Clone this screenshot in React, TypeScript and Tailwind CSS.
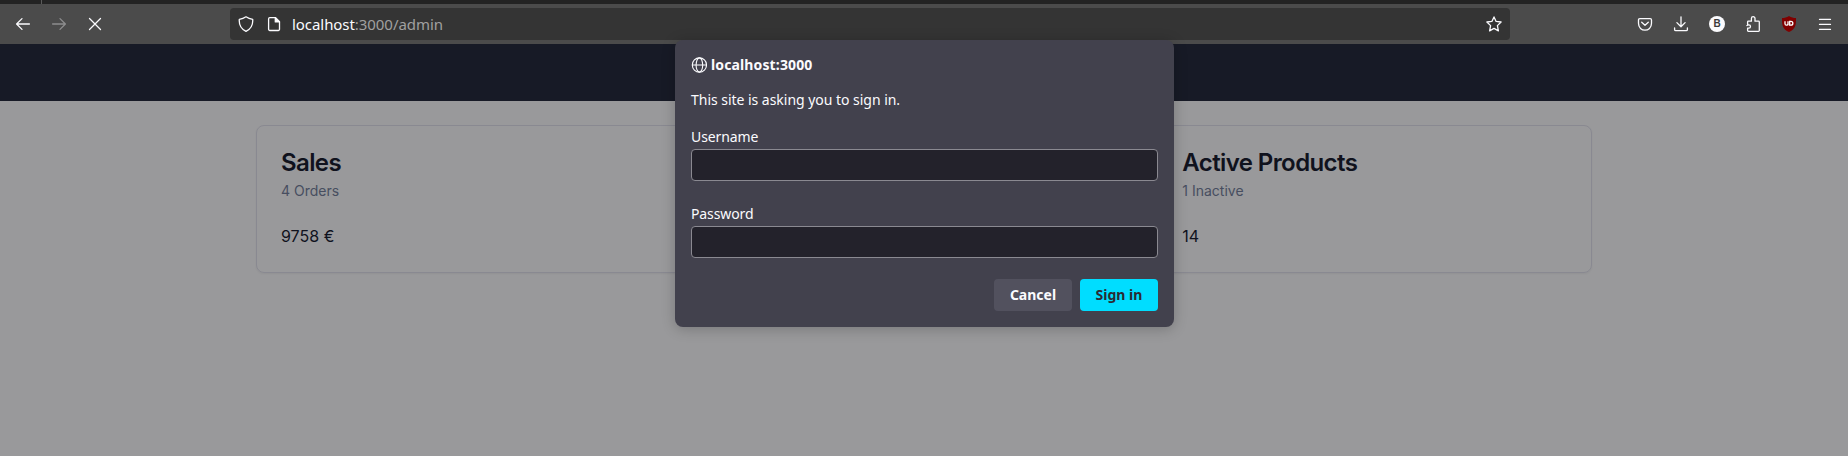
import React from "react";

type IconProps = { children: React.ReactNode; className?: string };

function Icon({ children, className = "" }: IconProps) {
  return (
    <svg
      viewBox="0 0 16 16"
      className={`size-4 shrink-0 ${className}`}
      fill="none"
      stroke="currentColor"
      strokeWidth="1.3"
      strokeLinecap="round"
      strokeLinejoin="round"
    >
      {children}
    </svg>
  );
}

function Toolbar() {
  return (
    <div className="flex h-10 items-center bg-[#4b4b4b] text-[#fbfbfe]">
      <div className="flex w-[230px] shrink-0 gap-5 pl-[15px]">
        <Icon>
          <path d="M14.4 8H1.8M7 2.6 1.6 8 7 13.4" />
        </Icon>
        <Icon className="text-[#8d8d8e]">
          <path d="M1.6 8h12.6M9 2.6 14.4 8 9 13.4" />
        </Icon>
        <Icon>
          <path d="m2.5 2.5 11 11M13.5 2.5l-11 11" />
        </Icon>
      </div>
      <div className="flex h-8 w-[1280px] shrink-0 items-center rounded bg-[#343434] px-2">
        <Icon>
          <path d="M8 .8C6 2.2 3.8 3 1.3 3.4c-.4 5.2 1.7 9.6 6.7 11.9 5-2.3 7.1-6.700 6.700-11.900C12.200 3 10 2.200 8 .8Z" />
        </Icon>
        <Icon className="ml-3">
          <path d="M3.800 1.700h5.700l4 4v7.600a1.200 1.200 0 0 1-1.200 1.200H3.800a1.200 1.200 0 0 1-1.200-1.200V2.900a1.200 1.200 0 0 1 1.200-1.200Z" />
          <path d="M9.300 1.700v4.200h4.200Z" fill="currentColor" />
        </Icon>
        <div className="ml-[10px] grow font-['Noto_Sans',sans-serif] text-[15px] leading-5 tracking-[-0.06px] whitespace-pre text-[#a0a0a0]">
          <span className="text-[#fbfbfe]">localhost</span>:3000/admin
        </div>
        <Icon>
          <path d="m8 .9 2.100 4.500 5 .6-3.700 3.600 1 5.300L8 12.400l-4.400 2.500 1-5.300L.9 6l5-.6Z" />
        </Icon>
      </div>
      <div className="flex grow items-center justify-end gap-5 pr-[15px]">
        <Icon>
          <path d="M2.800 2.600h10.400c.8 0 1.300.5 1.300 1.300v3.300c0 9.300-13 9.300-13 0V3.900c0-.8.5-1.300 1.300-1.300Z" />
          <path d="M4.700 6.200 8 9.300l3.300-3.100" />
        </Icon>
        <Icon>
          <path d="M8 .8v9.800M3.900 6.600 8 10.700l4.100-4.100M1.600 12v1.400c0 .8.500 1.200 1.200 1.200h10.400c.7 0 1.200-.4 1.200-1.200V12" />
        </Icon>
        <span className="flex size-4 shrink-0 items-center justify-center rounded-full bg-[#fbfbfe] font-['Liberation_Sans',sans-serif] text-[10px] leading-4 font-bold text-[#3b3b3b]">
          B
        </span>
        <Icon>
          <path d="M2.600 8.300V6c0-.5.300-.8.800-.8h3V2.500a1.800 1.800 0 0 1 3.600 0v2.700h3.500c.5 0 .8.300.8.800v8.500c0 .5-.3.800-.8.800H3.400c-.5 0-.8-.3-.8-.8v-2.300h1.200a1.700 1.700 0 0 0 0-3.400c-.9 0-1.500.3-1.900.8" />
        </Icon>
        <span className="relative flex size-4 shrink-0 items-center justify-center">
          <svg viewBox="0 0 16 16" className="absolute inset-0 size-4">
            <path
              d="M8 0c2.400 1.500 4.500 2 7 2 .2 7.500-.8 11.200-7 14C1.800 13.200.8 9.500 1 2c2.500 0 4.600-.5 7-2Z"
              fill="#800000"
            />
            <path
              d="M4 5.300v2.400a1.500 1.500 0 0 0 3 0V5.300v3.900M8.700 5.300v3.900h1.200a1.950 1.950 0 0 0 0-3.900Z"
              fill="none"
              stroke="#fff"
              strokeWidth="1.300"
            />
          </svg>
        </span>
        <Icon>
          <path d="M2.500 3.400h11M2.500 8.400h11M2.500 13.400h11" />
        </Icon>
      </div>
    </div>
  );
}

type CardProps = { title?: string; subtitle?: string; value?: string };

function StatCard({ title, subtitle, value }: CardProps) {
  return (
    <section className="h-[148px] rounded-lg border border-[#898991] shadow-xs">
      <div className="flex h-[98px] flex-col gap-1.5 px-6 pt-[25px]">
        <h3 className="text-2xl leading-none font-semibold tracking-tight">{title}</h3>
        <p className="text-sm text-[#474e60]">{subtitle}</p>
      </div>
      <p className="px-6">{value}</p>
    </section>
  );
}

function Field({ label, type }: { label: string; type: string }) {
  return (
    <label className="flex flex-col">
      <span className="h-[22px] leading-5 tracking-[-0.1px]">{label}</span>
      <input
        type={type}
        className="h-8 rounded border border-[#8a8991] bg-[#23222b] px-2 outline-none"
      />
    </label>
  );
}

function SignInDialog() {
  return (
    <div className="absolute top-10 left-[675px] flex h-[287px] w-[499px] flex-col rounded-lg bg-[#42414d] px-4 pt-[15px] font-['Noto_Sans',sans-serif] text-[14px] text-[#fbfbfe] shadow-[0_2px_14px_rgba(0,0,0,0.22)]">
      <div className="flex h-5 items-center gap-1 font-bold">
        <Icon className="[stroke-width:1.1]">
          <circle cx="8.400" cy="8" r="7.100" />
          <ellipse cx="8.400" cy="8" rx="3.300" ry="7.100" />
          <path d="M1.400 8h14" />
        </Icon>
        <span className="leading-5 tracking-[0.13px]">localhost:3000</span>
      </div>
      <p className="mt-[15px] leading-5 tracking-[-0.03px]">This site is asking you to sign in.</p>
      <div className="mt-[17px] flex flex-col gap-[23px]">
        <Field label="Username" type="text" />
        <Field label="Password" type="password" />
      </div>
      <div className="mt-[21px] flex justify-end gap-2 font-bold">
        <button className="h-8 w-[78px] rounded bg-[#52515e] pb-0.5">Cancel</button>
        <button className="h-8 w-[78px] rounded bg-[#00ddff] pb-0.5 text-[#2b2a33]">Sign in</button>
      </div>
    </div>
  );
}

export default function App() {
  return (
    <div className="relative h-[456px] w-[1848px] overflow-hidden bg-[#99999b] font-['Inter',sans-serif] text-base text-[#10121d]">
      <div className="flex h-1 bg-[#232323]">
        <div className="w-[42px] border-r border-[#5a5a5a]" />
      </div>
      <Toolbar />
      <div className="h-[57px] bg-[#171a26]" />
      <main className="mx-auto grid w-[1336px] grid-cols-3 gap-4 pt-6">
        <StatCard title="Sales" subtitle="4 Orders" value="9758 €" />
        <StatCard />
        <StatCard title="Active Products" subtitle="1 Inactive" value="14" />
      </main>
      <SignInDialog />
    </div>
  );
}
